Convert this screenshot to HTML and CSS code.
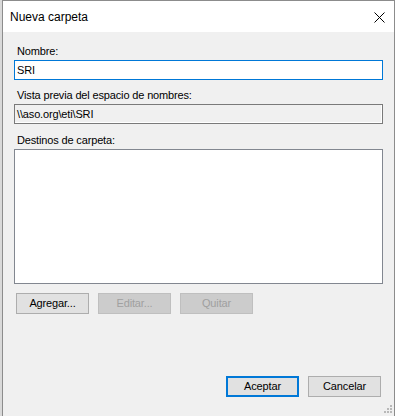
FILE: index.html
```html
<!DOCTYPE html>
<html lang="es">

<head>
    <meta charset="UTF-8">
    <title>Nueva carpeta</title>
    <link rel="stylesheet" href="styles.css">
</head>

<body>
    <div class="window">
        <div class="titlebar">
            <span class="title">Nueva carpeta</span>
            <span class="close">
                <svg width="11" height="11" viewBox="0 0 11 11">
                    <path d="M0.5 0.5 L10.5 10.5 M10.5 0.5 L0.5 10.5" stroke="#000" stroke-width="1" fill="none"/>
                </svg>
            </span>
        </div>
        <div class="body">
            <div class="lbl">Nombre:</div>
            <div class="field focus">SRI</div>

            <div class="lbl gap">Vista previa del espacio de nombres:</div>
            <div class="field readonly">\\aso.org\eti\SRI</div>

            <div class="lbl gap2">Destinos de carpeta:</div>
            <div class="list"></div>

            <div class="actions">
                <span class="btn">Agregar...</span>
                <span class="btn disabled">Editar...</span>
                <span class="btn disabled">Quitar</span>
            </div>

            <div class="footer">
                <span class="btn default">Aceptar</span>
                <span class="btn">Cancelar</span>
            </div>

            <svg class="grip" width="8" height="8" viewBox="0 0 8 8">
                <rect x="6" y="0" width="2" height="2" fill="#b8b8b8"/>
                <rect x="3" y="3" width="2" height="2" fill="#b8b8b8"/>
                <rect x="6" y="3" width="2" height="2" fill="#b8b8b8"/>
                <rect x="0" y="6" width="2" height="2" fill="#b8b8b8"/>
                <rect x="3" y="6" width="2" height="2" fill="#b8b8b8"/>
                <rect x="6" y="6" width="2" height="2" fill="#b8b8b8"/>
            </svg>
        </div>
    </div>
</body>

</html>
```

FILE: styles.css
```css
* {
    margin: 0;
    padding: 0;
    box-sizing: border-box;
}

html,
body {
    width: 395px;
    height: 416px;
    overflow: hidden;
    background: #d9d9d9;
    font-family: "Liberation Sans", Arial, sans-serif;
    font-size: 11px;
    color: #000;
}

.window {
    margin-left: 2px;
    width: 393px;
    height: 416px;
    border: 1px solid #8c8c8c;
    border-bottom: 0;
    background: #f0f0f0;
    display: flex;
    flex-direction: column;
}

.titlebar {
    height: 31px;
    background: #fff;
    display: flex;
    align-items: center;
    justify-content: space-between;
    padding: 0 9px 0 7px;
}

.title {
    font-size: 12px;
    margin-top: 1px;
}

.close {
    display: flex;
    margin-top: 2px;
}

.body {
    position: relative;
    flex: 1;
    display: flex;
    flex-direction: column;
    padding: 13px 0 0 11px;
    letter-spacing: -0.15px;
}

.lbl {
    height: 13px;
    line-height: 13px;
    padding-left: 3px;
    margin-bottom: 2px;
}

.lbl.gap {
    margin-top: 9px;
}

.lbl.gap2 {
    margin-top: 10px;
}

.field {
    width: 369px;
    height: 20px;
    line-height: 18px;
    padding-left: 2px;
    border: 1px solid #7a7a7a;
    background: #fff;
}

.field.focus {
    border-color: #0078d7;
}

.field.readonly {
    background: #f0f0f0;
    border-color: #7a7a7a;
    box-shadow: inset -1px -1px 0 #fff;
}

.list {
    width: 369px;
    height: 135px;
    border: 1px solid #828790;
    background: #fff;
}

.actions {
    display: flex;
    gap: 9px;
    margin: 9px 0 0 2px;
}

.footer {
    display: flex;
    gap: 9px;
    margin: 62px 0 0 212px;
}

.btn {
    width: 73px;
    height: 21px;
    line-height: 19px;
    text-align: center;
    border: 1px solid #adadad;
    background: #e1e1e1;
}

.btn.disabled {
    background: #cccccc;
    border-color: #bfbfbf;
    color: #a0a0a0;
}

.btn.default {
    border: 2px solid #0078d7;
    line-height: 17px;
}

.grip {
    position: absolute;
    right: 2px;
    bottom: 3px;
}
```
